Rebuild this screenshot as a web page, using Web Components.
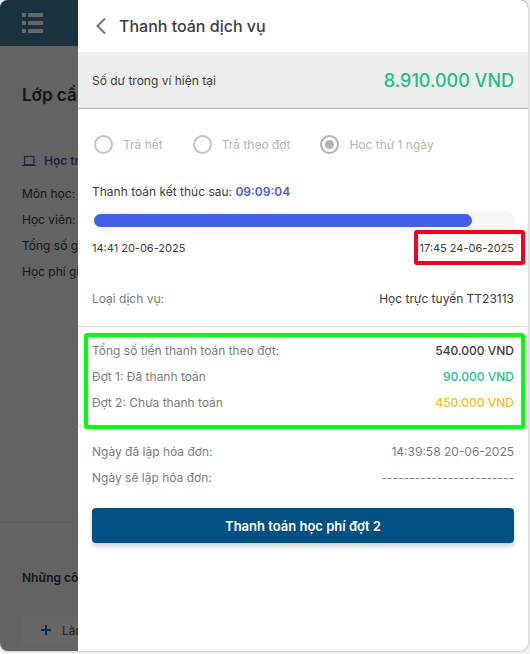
<!DOCTYPE html>
<html lang="vi">
<head>
<meta charset="utf-8">
<meta name="viewport" content="width=device-width, initial-scale=1">
<title>Thanh toán dịch vụ</title>
<style>
    body {
        margin: 0;
        background: #f1f1f1;
        font-family: Inter, "Open Sans", "Noto Sans", sans-serif;
        font-size: 12px;
        color: #3c3c3c;
    }
</style>
</head>
<body>

<class-page>
    <payment-drawer slot="drawer">
        <balance-bar slot="balance" amount="8.910.000 VND">Số dư trong ví hiện tại</balance-bar>

        <payment-options></payment-options>
        <payment-countdown remaining="09:09:04" value="90" start="14:41 20-06-2025" end="17:45 24-06-2025"></payment-countdown>

        <detail-group>
            <detail-row label="Loại dịch vụ:" tone="dark">Học trực tuyến TT23113</detail-row>
        </detail-group>
        <detail-group marked>
            <detail-row label="Tổng số tiền thanh toán theo đợt:" tone="total">540.000 VND</detail-row>
            <detail-row label="Đợt 1: Đã thanh toán" tone="paid">90.000 VND</detail-row>
            <detail-row label="Đợt 2: Chưa thanh toán" tone="unpaid">450.000 VND</detail-row>
        </detail-group>
        <detail-group>
            <detail-row label="Ngày đã lập hóa đơn:">14:39:58 20-06-2025</detail-row>
            <detail-row label="Ngày sẽ lập hóa đơn:">------------------------</detail-row>
        </detail-group>

        <pay-button>Thanh toán học phí đợt 2</pay-button>
    </payment-drawer>
</class-page>

<script>
class ClassPage extends HTMLElement {

    constructor() {
        super()
        this.attachShadow({ mode: 'open' })
        this.#render()
    }

    #render() {
        this.shadowRoot.innerHTML = `
            <style>
                :host {
                    display: block;
                    box-sizing: border-box;
                    height: 100vh;
                    min-height: 560px;
                    padding: 0 2px 3px 0;
                }

                .frame {
                    position: relative;
                    height: 100%;
                    overflow: hidden;
                    border-radius: 8px;
                    background: #ffffff;
                    box-shadow: 0 0 2px rgba(0,0,0,0.4);
                }

                .page {
                    display: flex;
                    flex-direction: column;
                    height: 100%;
                    white-space: nowrap;
                    background: #f8f8f8;
                }

                header {
                    display: flex;
                    align-items: center;
                    height: 46px;
                    padding: 0 22px;
                    background: #427d9c;
                }

                .menu-btn {
                    display: flex;
                    padding: 0;
                    border: none;
                    background: none;
                }

                h1 {
                    margin: 33px 22px 0;
                    font-size: 17px;
                    font-weight: 600;
                    line-height: 32px;
                }

                .lesson {
                    display: flex;
                    flex-direction: column;
                    flex: 1;
                    margin-top: 37px;
                    padding: 0 22px;
                    border-bottom: 1px solid #e6e6e6;
                }

                h2 {
                    display: flex;
                    align-items: center;
                    gap: 8px;
                    margin: 0 0 7px;
                    font-size: 12px;
                    font-weight: 600;
                    line-height: 26px;
                    color: #4457c0;
                }

                p {
                    margin: 0;
                    line-height: 26px;
                }

                h3 {
                    margin: 42px 22px 25px;
                    font-size: 12px;
                    font-weight: 600;
                    line-height: 26px;
                }

                .add-btn {
                    display: flex;
                    align-items: center;
                    gap: 10px;
                    margin: 0 22px 7px;
                    padding: 0 18px;
                    height: 28px;
                    border: none;
                    background: #ffffff;
                    font: inherit;
                    color: #555555;
                }

                .backdrop {
                    position: absolute;
                    inset: 0;
                    background: rgba(0,0,0,0.6);
                }

                .drawer {
                    position: absolute;
                    inset: 0 0 0 78px;
                    background: #ffffff;
                }
            </style>
            <div class="frame">
                <div class="page">
                    <header>
                        <button class="menu-btn" type="button" aria-label="Menu">
                            <svg width="21" height="22" viewBox="0 0 21 22" fill="#ffffff">
                                <path d="M0 1h4v4H0zM0 9h4v4H0zM0 17h4v4H0zM6 1h15v4H6zM6 9h15v4H6zM6 17h15v4H6z"/>
                            </svg>
                        </button>
                    </header>
                    <h1>Lớp cần</h1>
                    <section class="lesson">
                        <h2>
                            <svg width="14" height="12" viewBox="0 0 14 12" fill="none" stroke="currentColor">
                                <path d="M2.500 9V1.500h9.500V9M0 10.500h14M2 9.500h10" stroke-width="1.200"/>
                            </svg>
                            Học trực tuyến
                        </h2>
                        <p>Môn học:</p>
                        <p>Học viên:</p>
                        <p>Tổng số giờ:</p>
                        <p>Học phí giờ:</p>
                    </section>
                    <h3>Những công</h3>
                    <button class="add-btn" type="button">
                        <svg width="12" height="12" viewBox="0 0 12 12" stroke="#2a6db0" stroke-width="2">
                            <path d="M6 1v10M1 6h10"/>
                        </svg>
                        Làm
                    </button>
                </div>
                <div class="backdrop"></div>
                <div class="drawer"><slot name="drawer"></slot></div>
            </div>
        `
    }

}

class PaymentDrawer extends HTMLElement {

    #backBtn

    constructor() {
        super()
        this.attachShadow({ mode: 'open' })
        this.#render()
    }

    connectedCallback() {
        this.#backBtn.addEventListener('click', () => {
            this.dispatchEvent(new CustomEvent('back-event', {
                bubbles: true,
                composed: true
            }))
        })
    }

    #render() {
        this.shadowRoot.innerHTML = `
            <style>
                :host {
                    display: block;
                }

                header {
                    display: flex;
                    align-items: center;
                    gap: 12px;
                    height: 52px;
                    padding: 0 17px;
                }

                .back-btn {
                    display: flex;
                    padding: 0;
                    border: none;
                    background: none;
                }

                h1 {
                    margin: 0;
                    font-size: 16px;
                    font-weight: 500;
                    line-height: 24px;
                }
            </style>
            <header>
                <button class="back-btn" type="button" aria-label="Quay lại">
                    <svg width="12" height="18" viewBox="0 0 12 18" fill="none" stroke="#757575" stroke-width="2">
                        <path d="M10 1.500L2.500 9L10 16.500"/>
                    </svg>
                </button>
                <h1>Thanh toán dịch vụ</h1>
            </header>
            <slot name="balance"></slot>
            <slot></slot>
        `

        this.#backBtn = this.shadowRoot.querySelector('.back-btn')
    }

}

class BalanceBar extends HTMLElement {

    constructor() {
        super()
        this.attachShadow({ mode: 'open' })
        this.shadowRoot.innerHTML = `
            <style>
                :host {
                    display: flex;
                    align-items: center;
                    justify-content: space-between;
                    height: 56px;
                    padding: 0 14px;
                    border-bottom: 1px solid #b8b8b8;
                    background: #ededed;
                }

                strong {
                    font-size: 18px;
                    font-weight: 500;
                    color: #1fbf83;
                }
            </style>
            <span><slot></slot></span>
            <strong>${this.getAttribute('amount')}</strong>
        `
    }

}

class PaymentOptions extends HTMLElement {

    constructor() {
        super()
        this.attachShadow({ mode: 'open' })
        this.shadowRoot.innerHTML = `
            <style>
                :host {
                    display: block;
                    padding: 25px 16px 0;
                    color: #b5b5b5;
                }

                fieldset {
                    display: flex;
                    gap: 30px;
                    margin: 0;
                    padding: 0;
                    border: none;
                }

                label {
                    display: flex;
                    align-items: center;
                    gap: 10px;
                    height: 20px;
                    white-space: nowrap;
                }

                input {
                    appearance: none;
                    box-sizing: border-box;
                    width: 19px;
                    height: 19px;
                    margin: 0;
                    border: 2px solid #c4c4c4;
                    border-radius: 50%;
                }

                input:checked {
                    border-color: #b3b3b3;
                    background: radial-gradient(circle, #b3b3b3 4px, transparent 5px);
                }
            </style>
            <fieldset disabled>
                <label><input type="radio" name="plan">Trả hết</label>
                <label><input type="radio" name="plan">Trả theo đợt</label>
                <label><input type="radio" name="plan" checked>Học thử 1 ngày</label>
            </fieldset>
        `
    }

}

class PaymentCountdown extends HTMLElement {

    constructor() {
        super()
        this.attachShadow({ mode: 'open' })
        this.shadowRoot.innerHTML = `
            <style>
                :host {
                    display: block;
                    padding: 25px 14px 0;
                }

                p {
                    margin: 0;
                    line-height: 26px;
                }

                b {
                    font-weight: 600;
                    color: #4660d2;
                }

                .track {
                    height: 13px;
                    margin: 7px 0 0 2px;
                    padding: 2px 0;
                    border-radius: 8px;
                    background: #f6f6f6;
                    box-shadow: 0 3px 5px rgba(0,0,0,0.06);
                }

                .bar {
                    width: ${this.getAttribute('value')}%;
                    height: 100%;
                    border-radius: 8px;
                    background: #465fe8;
                }

                .dates {
                    display: flex;
                    justify-content: space-between;
                    margin-top: 6px;
                    font-size: 11px;
                    line-height: 26px;
                }

                .end {
                    position: relative;
                }

                .end::after {
                    content: "";
                    position: absolute;
                    inset: -5px -11px -4px -5px;
                    border: 4px solid #f2001d;
                    border-radius: 3px;
                }
            </style>
            <p>Thanh toán kết thúc sau: <b>${this.getAttribute('remaining')}</b></p>
            <div class="track" role="progressbar" aria-label="Thời gian" aria-valuenow="${this.getAttribute('value')}">
                <div class="bar"></div>
            </div>
            <div class="dates">
                <time>${this.getAttribute('start')}</time>
                <time class="end">${this.getAttribute('end')}</time>
            </div>
        `
    }

}

class DetailGroup extends HTMLElement {

    constructor() {
        super()
        this.attachShadow({ mode: 'open' })
        this.shadowRoot.innerHTML = `
            <style>
                :host {
                    display: block;
                    position: relative;
                    padding: 12px 14px 10px;
                    border-top: 1px solid #d9dfe3;
                }

                :host(:first-of-type) {
                    padding: 25px 14px 14px;
                    border-top: none;
                }

                :host([marked]) {
                    padding: 11px 14px 10px;
                }

                :host([marked])::after {
                    content: "";
                    position: absolute;
                    z-index: 1;
                    inset: 6px 3px -3px 6px;
                    border: 4px solid #00ff0a;
                    border-radius: 3px;
                }
            </style>
            <slot></slot>
        `
    }

}

class DetailRow extends HTMLElement {

    constructor() {
        super()
        this.attachShadow({ mode: 'open' })
        this.shadowRoot.innerHTML = `
            <style>
                :host {
                    display: flex;
                    justify-content: space-between;
                    line-height: 26px;
                    color: #7b7b7b;
                }

                :host([tone]) .value {
                    color: #3c3c3c;
                }

                :host([tone="total"]) .value,
                :host([tone="paid"]) .value,
                :host([tone="unpaid"]) .value {
                    font-weight: 500;
                }

                :host([tone="paid"]) .value {
                    color: #1fbf8b;
                }

                :host([tone="unpaid"]) .value {
                    color: #f0c022;
                }
            </style>
            <span>${this.getAttribute('label')}</span>
            <span class="value"><slot></slot></span>
        `
    }

}

class PayButton extends HTMLElement {

    constructor() {
        super()
        this.attachShadow({ mode: 'open' })
        this.shadowRoot.innerHTML = `
            <style>
                :host {
                    display: block;
                    padding: 7px 14px 0;
                }

                button {
                    width: 100%;
                    height: 35px;
                    border: none;
                    border-radius: 4px;
                    background: #035183;
                    box-shadow: 0 3px 5px rgba(0,0,0,0.2);
                    font: inherit;
                    font-size: 13px;
                    font-weight: 600;
                    color: #ffffff;
                }
            </style>
            <button type="button"><slot></slot></button>
        `
    }

}

window.customElements.define('class-page', ClassPage)
window.customElements.define('payment-drawer', PaymentDrawer)
window.customElements.define('balance-bar', BalanceBar)
window.customElements.define('payment-options', PaymentOptions)
window.customElements.define('payment-countdown', PaymentCountdown)
window.customElements.define('detail-group', DetailGroup)
window.customElements.define('detail-row', DetailRow)
window.customElements.define('pay-button', PayButton)
</script>
</body>
</html>
